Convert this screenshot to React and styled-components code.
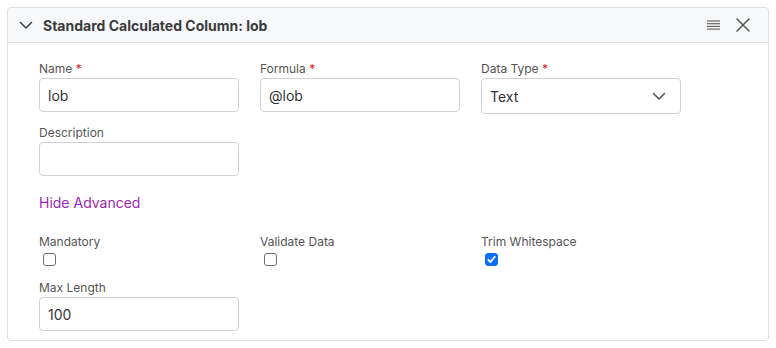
import React from 'react';
import styled, { createGlobalStyle } from 'styled-components';

const GlobalStyle = createGlobalStyle`
  body {
    margin: 0;
    padding: 7px;
    background: #fff;
    font-family: Inter, 'Noto Sans', sans-serif;
  }
  * { box-sizing: border-box; }
`;

function ChevronDown({ size = 14, color = '#444' }) {
  return (
    <svg width={size} height={size} viewBox="0 0 14 14" fill="none">
      <path d="M1.5 4.5 L7 10 L12.5 4.5" stroke={color} strokeWidth="1.6" strokeLinecap="round" strokeLinejoin="round" />
    </svg>
  );
}

function Checkbox({ checked }) {
  return (
    <Box checked={checked}>
      {checked && (
        <svg width="9" height="9" viewBox="0 0 9 9" fill="none">
          <path d="M1.3 4.8 L3.5 7 L7.8 1.8" stroke="#fff" strokeWidth="1.8" strokeLinecap="round" strokeLinejoin="round" />
        </svg>
      )}
    </Box>
  );
}

function App() {
  return (
    <>
      <GlobalStyle />
      <Card>
        <Header>
          <ChevronDown size={14} color="#444" />
          <Title>Standard Calculated Column: lob</Title>
          <Actions>
            <svg width="13" height="10" viewBox="0 0 13 10">
              <g stroke="#666" strokeWidth="1.2">
                <line x1="0" y1="1" x2="13" y2="1" />
                <line x1="0" y1="3.7" x2="13" y2="3.7" />
                <line x1="0" y1="6.4" x2="13" y2="6.4" />
                <line x1="0" y1="9.1" x2="13" y2="9.1" />
              </g>
            </svg>
            <svg width="14" height="14" viewBox="0 0 14 14">
              <path d="M1 1 L13 13 M13 1 L1 13" stroke="#555" strokeWidth="1.5" strokeLinecap="round" />
            </svg>
          </Actions>
        </Header>
        <Body>
          <Grid gap={11}>
            <Field>
              <Label>Name <Req>*</Req></Label>
              <Input defaultValue="lob" />
            </Field>
            <Field>
              <Label>Formula <Req>*</Req></Label>
              <Input defaultValue="@lob" />
            </Field>
            <Field>
              <Label>Data Type <Req>*</Req></Label>
              <Select>
                <span>Text</span>
                <ChevronDown size={14} color="#555" />
              </Select>
            </Field>
            <Field>
              <Label>Description</Label>
              <Input defaultValue="" />
            </Field>
          </Grid>
          <Toggle>Hide Advanced</Toggle>
          <Grid gap={14}>
            <CheckField>
              <Label>Mandatory</Label>
              <Checkbox />
            </CheckField>
            <CheckField>
              <Label>Validate Data</Label>
              <Checkbox />
            </CheckField>
            <CheckField>
              <Label>Trim Whitespace</Label>
              <Checkbox checked />
            </CheckField>
            <Field>
              <Label>Max Length</Label>
              <Input defaultValue="100" />
            </Field>
          </Grid>
        </Body>
      </Card>
    </>
  );
}

const Card = styled.div`
  width: 762px;
  border: 1px solid #dcdfe3;
  border-radius: 4px;
  background: #fff;
`;

const Header = styled.div`
  height: 35px;
  display: flex;
  align-items: center;
  padding: 0 18px 0 11px;
  background: #f7f8f9;
  border-bottom: 1px solid #dcdfe3;
  border-radius: 4px 4px 0 0;
  gap: 10px;
`;

const Title = styled.div`
  flex: 1;
  font-size: 14px;
  font-weight: 700;
  color: #3b3b3b;
`;

const Actions = styled.div`
  display: flex;
  align-items: center;
  gap: 16px;
`;

const Body = styled.div`
  padding: 18px 31px 9px;
`;

const Grid = styled.div`
  display: grid;
  grid-template-columns: repeat(3, 200px);
  column-gap: 21px;
  row-gap: ${p => p.gap}px;
`;

const Field = styled.div`
  display: flex;
  flex-direction: column;
  gap: 2px;
`;

const CheckField = styled.div`
  display: flex;
  flex-direction: column;
  gap: 4px;
`;

const Label = styled.div`
  font-size: 12px;
  line-height: 15px;
  color: #555;
`;

const Req = styled.span`
  color: #e0151b;
`;

const Input = styled.input`
  width: 200px;
  height: 34px;
  border: 1px solid #ced2d7;
  border-radius: 4px;
  padding: 0 8px;
  font-family: inherit;
  font-size: 14px;
  color: #333;
  outline: none;
`;

const Select = styled.div`
  width: 200px;
  height: 36px;
  border: 1px solid #ced2d7;
  border-radius: 4px;
  padding: 0 14px 0 8px;
  display: flex;
  align-items: center;
  justify-content: space-between;
  font-size: 14px;
  color: #333;
`;

const Toggle = styled.div`
  margin: 18px 0 23px;
  font-size: 14px;
  line-height: 17px;
  color: #9d27b0;
`;

const Box = styled.span`
  margin-left: 4px;
  width: 13px;
  height: 13px;
  border-radius: 3px;
  border: 1px solid ${p => (p.checked ? '#0b6cf4' : '#6f6f6f')};
  background: ${p => (p.checked ? '#0b6cf4' : '#fff')};
  display: flex;
  align-items: center;
  justify-content: center;
`;

export default App;
